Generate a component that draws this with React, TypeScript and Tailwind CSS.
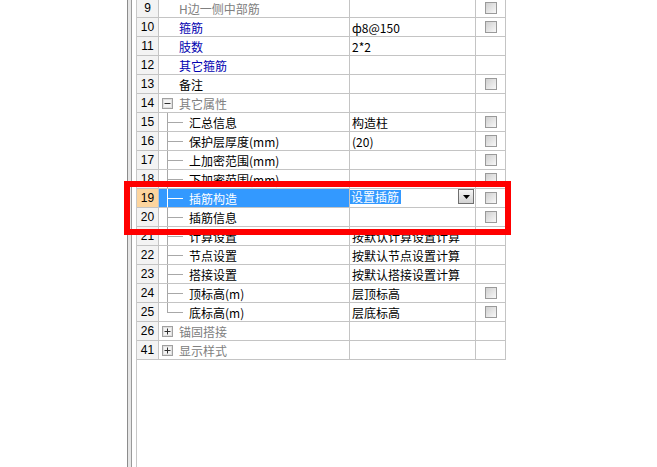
import React from 'react'

type Row = {
  n: number
  name: string
  tone?: 'gray' | 'blue'
  value?: string
  check?: boolean
  toggle?: 'plus' | 'minus'
  tree?: boolean
  last?: boolean
  selected?: boolean
}

const rows: Row[] = [
  { n: 9, name: 'H边一侧中部筋', tone: 'gray', check: true },
  { n: 10, name: '箍筋', tone: 'blue', value: 'ф8@150', check: true },
  { n: 11, name: '肢数', tone: 'blue', value: '2*2' },
  { n: 12, name: '其它箍筋', tone: 'blue' },
  { n: 13, name: '备注', check: true },
  { n: 14, name: '其它属性', tone: 'gray', toggle: 'minus' },
  { n: 15, name: '汇总信息', tree: true, value: '构造柱', check: true },
  { n: 16, name: '保护层厚度(mm)', tree: true, value: '(20)', check: true },
  { n: 17, name: '上加密范围(mm)', tree: true, check: true },
  { n: 18, name: '下加密范围(mm)', tree: true, check: true },
  { n: 19, name: '插筋构造', tree: true, selected: true, value: '设置插筋', check: true },
  { n: 20, name: '插筋信息', tree: true, check: true },
  { n: 21, name: '计算设置', tree: true, value: '按默认计算设置计算' },
  { n: 22, name: '节点设置', tree: true, value: '按默认节点设置计算' },
  { n: 23, name: '搭接设置', tree: true, value: '按默认搭接设置计算' },
  { n: 24, name: '顶标高(m)', tree: true, value: '层顶标高', check: true },
  { n: 25, name: '底标高(m)', tree: true, last: true, value: '层底标高', check: true },
  { n: 26, name: '锚固搭接', tone: 'gray', toggle: 'plus' },
  { n: 41, name: '显示样式', tone: 'gray', toggle: 'plus' },
]

function Toggle({ kind }: { kind: 'plus' | 'minus' }) {
  return (
    <svg width="11" height="11" viewBox="0 0 11 11" className="shrink-0">
      <rect x="0.5" y="0.5" width="10" height="10" fill="#f4f4f4" stroke="#a0a0a0" />
      <rect x="1.5" y="1.5" width="8" height="8" fill="none" stroke="#e0e0e0" />
      <line x1="2.5" y1="5.5" x2="8.5" y2="5.5" stroke="#303030" />
      {kind === 'plus' && <line x1="5.5" y1="2.5" x2="5.5" y2="8.5" stroke="#303030" />}
    </svg>
  )
}

function TreeLines({ last, light }: { last?: boolean; light?: boolean }) {
  const c = light ? '#ffffff' : '#a8a8a8'
  return (
    <svg width="30" height="18" viewBox="0 0 30 18" className="shrink-0">
      <line x1="8.5" y1="0" x2="8.5" y2={last ? 9.5 : 18} stroke={c} />
      <line x1="8" y1="9.5" x2="24" y2="9.5" stroke={c} />
    </svg>
  )
}

function Check() {
  return (
    <span className="block w-[12px] h-[12px] border border-[#9a9a9a] bg-linear-to-br from-[#d0d0d0] to-[#f8f8f8]" />
  )
}

function GridRow({ r }: { r: Row }) {
  const text =
    r.selected ? 'text-white' : r.tone === 'gray' ? 'text-[#808080]' : r.tone === 'blue' ? 'text-[#0000b0]' : 'text-black'
  return (
    <div className="flex h-[19px] border-b border-[#c4c4c4]">
      <div
        className={`w-[22px] shrink-0 border-r border-[#c4c4c4] flex items-center justify-center font-['Liberation_Sans',sans-serif] text-[12px] ${
          r.selected ? 'bg-[#fdd59e]' : 'bg-[#f3f3f3]'
        }`}
      >
        {r.n}
      </div>
      <div
        className={`w-[191px] shrink-0 border-r border-[#c4c4c4] flex items-center whitespace-nowrap overflow-hidden ${
          r.selected ? 'bg-[#3399ff]' : ''
        } ${text}`}
      >
        {r.tree ? (
          <TreeLines last={r.last} light={r.selected} />
        ) : r.toggle ? (
          <div className="w-[20px] shrink-0 pl-[3px] flex items-center">
            <Toggle kind={r.toggle} />
          </div>
        ) : (
          <div className="w-[20px] shrink-0" />
        )}
        <span className="mt-[2px]">{r.name}</span>
      </div>
      <div className="w-[126px] shrink-0 border-r border-[#c4c4c4] flex items-center whitespace-nowrap overflow-hidden text-black">
        {r.selected ? (
          <div className="flex-1 h-full flex items-start justify-between">
            <span className="mt-[1px] leading-[14px] bg-[#3399ff] text-white pl-[1px] pr-[2px]">{r.value}</span>
            <span className="mr-[1px] w-[16px] h-[15px] border border-[#6f6f6f] bg-linear-to-b from-[#f6f6f6] to-[#d2d2d2] flex items-center justify-center">
              <svg width="7" height="4" viewBox="0 0 7 4">
                <path d="M0 0h7L3.5 4z" fill="#000" />
              </svg>
            </span>
          </div>
        ) : (
          <span className="pl-[2px] mt-[2px]">{r.value}</span>
        )}
      </div>
      <div className="w-[30px] shrink-0 border-r border-[#c4c4c4] flex items-center justify-center">
        {r.check && <Check />}
      </div>
    </div>
  )
}

export default function App() {
  return (
    <div className="relative w-[657px] h-[467px] bg-white overflow-hidden flex font-['Noto_Sans_CJK_SC','Liberation_Sans',sans-serif] text-[12px] leading-[18px]">
      {/* panel frame on the left */}
      <div className="w-[127px] shrink-0" />
      <div className="w-px shrink-0 bg-[#8c8c8c]" />
      <div className="w-[3px] shrink-0 bg-[#e6e6e6]" />
      <div className="w-px shrink-0 bg-[#9a9a9a]" />
      <div className="w-[4px] shrink-0" />
      <div className="w-px shrink-0 bg-[#c8c8c8]" />

      {/* property grid */}
      <div className="-mt-px w-[369px] shrink-0 self-start">
        {rows.map((r) => (
          <GridRow key={r.n} r={r} />
        ))}
      </div>

      {/* red highlight frame */}
      <div className="absolute left-[124px] top-[181px] w-[387px] h-[54px] border-[6px] border-[#ff0000]" />
    </div>
  )
}
